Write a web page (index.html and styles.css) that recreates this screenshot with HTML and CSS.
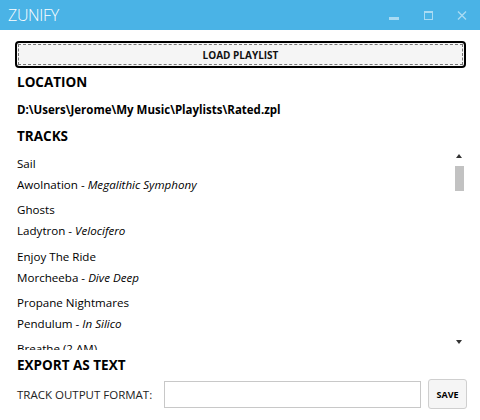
FILE: index.html
```html
<!DOCTYPE html>
<html>
<head>
<meta charset="utf-8">
<link rel="stylesheet" href="styles.css">
</head>
<body>
<div class="window">
  <header class="titlebar">
    <span class="title">ZUNIFY</span>
    <div class="controls">
      <svg class="ctl" width="12" height="12" viewBox="0 0 12 12"><rect x="1" y="7" width="10" height="3" fill="#a9dbf3"/></svg>
      <svg class="ctl" width="12" height="12" viewBox="0 0 12 12"><rect x="2.5" y="1.5" width="8" height="8" fill="none" stroke="#a9dbf3" stroke-width="1"/><rect x="2" y="1" width="9" height="2" fill="#a9dbf3"/></svg>
      <svg class="ctl" width="12" height="12" viewBox="0 0 12 12"><path d="M2 1.5 L10 9.5 M10 1.5 L2 9.5" stroke="#a9dbf3" stroke-width="1.4"/></svg>
    </div>
  </header>
  <main class="content">
    <button class="load"><span class="focus">LOAD PLAYLIST</span></button>
    <h2 class="heading first">LOCATION</h2>
    <div class="path">D:\Users\Jerome\My Music\Playlists\Rated.zpl</div>
    <h2 class="heading tracks-h">TRACKS</h2>
    <div class="listwrap">
      <ul class="tracks">
        <li><div>Sail</div><div>Awolnation - <i>Megalithic Symphony</i></div></li>
        <li><div>Ghosts</div><div>Ladytron - <i>Velocifero</i></div></li>
        <li><div>Enjoy The Ride</div><div>Morcheeba - <i>Dive Deep</i></div></li>
        <li><div>Propane Nightmares</div><div>Pendulum - <i>In Silico</i></div></li>
        <li><div>Breathe (2 AM)</div></li>
      </ul>
      <div class="scrollbar">
        <span class="arrow up"></span>
        <span class="thumb"></span>
        <span class="spacer"></span>
        <span class="arrow down"></span>
      </div>
    </div>
    <h2 class="heading export">EXPORT AS TEXT</h2>
    <div class="format">
      <label>TRACK OUTPUT FORMAT:</label>
      <input type="text" class="input">
      <button class="save">SAVE</button>
    </div>
  </main>
</div>
</body>
</html>
```

FILE: styles.css
```css
html, body { margin: 0; padding: 0; background: #fff; }
body { width: 480px; height: 420px; overflow: hidden; font-family: "Open Sans", "Noto Sans", sans-serif; color: #000; }
.window { display: flex; flex-direction: column; height: 420px; }
.titlebar { height: 30px; background: #4ab3e6; display: flex; align-items: center; justify-content: space-between; padding: 0 0 0 8px; }
.title { color: #fff; font-family: "Open Sans", sans-serif; font-weight: 300; font-size: 16px; letter-spacing: -0.3px; }
.controls { display: flex; gap: 22px; padding-right: 12px; padding-top: 2px; }
.ctl { display: block; }
.content { padding: 11px 13px 0 17px; display: flex; flex-direction: column; }
.load { margin: 0 0 0 -2px; width: 451px; height: 27px; border: 2px solid #000; border-radius: 4px; background: #f5f5f5; padding: 1px; font-family: inherit; font-weight: 700; font-size: 10px; color: #111; display: flex; }
.load .focus { flex: 1; border: 1px dashed #777; display: flex; align-items: center; justify-content: center; }
.heading { margin: 7px 0 0; font-size: 13.5px; font-weight: 700; line-height: 18px; }
.heading.first { margin-top: 5px; }
.path { font-size: 11.5px; font-weight: 700; margin-top: 10px; line-height: 18px; }
.heading.tracks-h { margin-top: 8px; }
.listwrap { display: flex; height: 196px; margin-top: 9px; overflow: hidden; }
.tracks { list-style: none; margin: 0; padding: 0; flex: 1; font-size: 11.6px; line-height: 20px; }
.tracks li { margin-bottom: 5.25px; }
.tracks li div:first-child { margin-bottom: 1px; }
.scrollbar { width: 10px; display: flex; flex-direction: column; align-items: center; margin-right: 3px; padding-top: 0; padding-bottom: 6px; }
.arrow { width: 0; height: 0; border-left: 3px solid transparent; border-right: 3px solid transparent; }
.arrow.up { border-bottom: 4px solid #333; }
.arrow.down { border-top: 4px solid #333; }
.thumb { width: 9px; height: 25px; background: #c2c2c2; margin-top: 8px; }
.spacer { flex: 1; }
.export { margin-top: 6px; }
.format { display: flex; align-items: center; margin-top: 5px; font-size: 11.5px; }
.format label { width: 147px; color: #222; }
.input { width: 257px; height: 27px; box-sizing: border-box; border: 1px solid #c8c8c8; margin: 0; padding: 0; }
.save { margin-left: 7px; width: 39px; height: 30px; border: 1px solid #cfcfcf; border-radius: 3px; background: #f5f5f5; font-family: inherit; font-weight: 700; font-size: 9px; padding: 0; }
```
